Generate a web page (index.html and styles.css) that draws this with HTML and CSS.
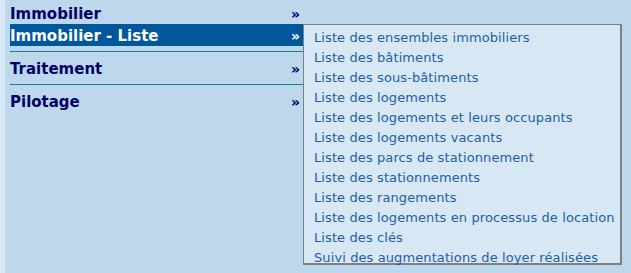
FILE: index.html
```html
<!DOCTYPE html>
<html lang="fr">
<head>
  <meta charset="UTF-8" />
  <title>Menu</title>
  <link rel="stylesheet" href="styles.css">
</head>
<body>
  <div class="strip"></div>
  <nav class="menu">
    <ul class="menu-list">
      <li class="menu-item">
        <a href="#">Immobilier</a><span class="arrow">&raquo;</span>
      </li>
      <li class="menu-item active">
        <a href="#">Immobilier - Liste</a><span class="arrow">&raquo;</span>
        <ul class="submenu">
          <li><a href="#">Liste des ensembles immobiliers</a></li>
          <li><a href="#">Liste des bâtiments</a></li>
          <li><a href="#">Liste des sous-bâtiments</a></li>
          <li><a href="#">Liste des logements</a></li>
          <li><a href="#">Liste des logements et leurs occupants</a></li>
          <li><a href="#">Liste des logements vacants</a></li>
          <li><a href="#">Liste des parcs de stationnement</a></li>
          <li><a href="#">Liste des stationnements</a></li>
          <li><a href="#">Liste des rangements</a></li>
          <li><a href="#">Liste des logements en processus de location</a></li>
          <li><a href="#">Liste des clés</a></li>
          <li><a href="#">Suivi des augmentations de loyer réalisées</a></li>
        </ul>
      </li>
      <li class="sep"></li>
      <li class="menu-item">
        <a href="#">Traitement</a><span class="arrow">&raquo;</span>
      </li>
      <li class="sep"></li>
      <li class="menu-item">
        <a href="#">Pilotage</a><span class="arrow">&raquo;</span>
      </li>
    </ul>
  </nav>
</body>
</html>
```

FILE: styles.css
```css
* {
  box-sizing: border-box;
  margin: 0;
  padding: 0;
}

html, body {
  width: 100%;
  height: 100%;
  overflow: hidden;
  background: #bdd8ec;
  font-family: 'DejaVu Sans', Verdana, sans-serif;
}

body {
  display: flex;
}

.strip {
  width: 5px;
  background: #d6e7f5;
}

.menu {
  padding: 2px 0 0 5px;
  width: 298px;
}

.menu-list {
  list-style: none;
  position: relative;
}

.menu-item {
  display: flex;
  justify-content: space-between;
  align-items: center;
  height: 22px;
  padding: 2px 0 0 0;
}

.menu-item > a {
  color: #000066;
  font-weight: bold;
  font-size: 15px;
  text-decoration: none;
}

.arrow {
  color: #000066;
  font-weight: bold;
  font-size: 14px;
  margin-right: 3px;
}

.menu-item.active {
  background: #00579c;
}

.menu-item.active > a,
.menu-item.active > .arrow {
  color: #fff;
}

/* linea di separazione */
.sep {
  height: 1px;
  margin: 5px 0;
  background: #1b7a8c;
}

.submenu {
  position: absolute;
  top: 22px;
  left: 293px;
  width: 319px;
  height: 241px;
  padding: 2px 0 0 10px;
  list-style: none;
  background: #d7e7f4;
  border: 1px solid #808080;
  border-right-width: 2px;
  border-bottom-width: 2px;
}

.submenu li {
  height: 20px;
  line-height: 20px;
}

.submenu a {
  color: #1f5fa5;
  font-size: 13px;
  letter-spacing: 0.1px;
  font-weight: normal;
  text-decoration: none;
  white-space: nowrap;
}
```
